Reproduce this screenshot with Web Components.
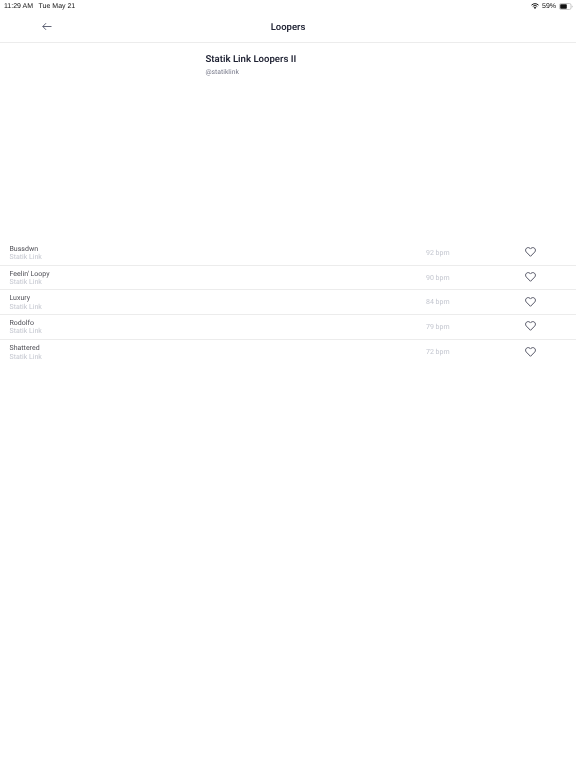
<!DOCTYPE html>
<html>
<head>
<meta charset="utf-8">
<style>
  html, body { margin: 0; height: 100%; background: #fff; }
  body { font-family: Roboto, "Noto Sans", sans-serif; width: 576px; height: 768px; overflow: hidden; text-rendering: geometricPrecision; }
  #page { opacity: .999; will-change: opacity; }
</style>
</head>
<body>
<div id="page">
<status-bar time="11:29 AM" date="Tue May 21" battery="59%"></status-bar>
<nav-bar title="Loopers"></nav-bar>
<pack-header title="Statik Link Loopers II" handle="@statiklink"></pack-header>
<loop-list>
  <loop-row name="Bussdwn" artist="Statik Link" bpm="92 bpm"></loop-row>
  <loop-row name="Feelin' Loopy" artist="Statik Link" bpm="90 bpm"></loop-row>
  <loop-row name="Luxury" artist="Statik Link" bpm="84 bpm"></loop-row>
  <loop-row name="Rodolfo" artist="Statik Link" bpm="79 bpm"></loop-row>
  <loop-row name="Shattered" artist="Statik Link" bpm="72 bpm" last></loop-row>
</loop-list>
</div>
<script>
class StatusBar extends HTMLElement {
  connectedCallback() {
    this.attachShadow({ mode: 'open' }).innerHTML = `
    <style>
      :host { display: flex; height: 12px; padding: 0 3px 0 4px; align-items: center; justify-content: space-between;
        font: 400 7px "Liberation Sans", Arial, sans-serif; color: #111; }
      .left { display: flex; gap: 5.5px; padding-top: 1px; }
      .right { display: flex; align-items: center; gap: 3px; padding-top: 1px; }
      .wifi { margin-top: -1px; }
      .batt { display: block; }
    </style>
    <div class="left"><span>${this.getAttribute('time')}</span><span>${this.getAttribute('date')}</span></div>
    <div class="right">
      <svg class="wifi" width="8" height="6" viewBox="0 0 16 12" fill="none" stroke="#111" stroke-width="2">
        <path d="M1 4.200C5 .4 11 .4 15 4.200M3.500 7c2.600-2.400 6.400-2.400 9 0"/><path d="M8 11.800 5.200 9c1.600-1.400 4-1.400 5.600 0z" fill="#111" stroke="none"/>
      </svg>
      <span>${this.getAttribute('battery')}</span>
      <svg class="batt" width="14" height="7" viewBox="0 0 14 7">
        <rect x=".5" y=".5" width="11.500" height="6" rx="1.600" fill="none" stroke="#bbb" stroke-width=".8"/>
        <rect x="1.200" y="1.200" width="6.600" height="4.600" rx=".8" fill="#111"/>
        <path d="M12.800 2.400c.6.2.9.6.9 1.100s-.3.9-.9 1.100z" fill="#bbb"/>
      </svg>
    </div>`;
  }
}
class NavBar extends HTMLElement {
  connectedCallback() {
    this.attachShadow({ mode: 'open' }).innerHTML = `
    <style>
      :host { display: flex; height: 30px; position: relative; align-items: center; justify-content: center;
        border-bottom: 1px solid #ececec; color: #1f2233; font-size: 9.500px; font-weight: 600; }
      svg { position: absolute; left: 42px; top: 10px; }
    </style>
    <svg width="10" height="9" viewBox="0 0 10 9" fill="none" stroke="#3a3f55" stroke-width=".8"><path d="M9.500 4.500H.8M4 1.200.8 4.500 4 7.800"/></svg>
    <span>${this.getAttribute('title')}</span>`;
  }
}
class PackHeader extends HTMLElement {
  connectedCallback() {
    this.attachShadow({ mode: 'open' }).innerHTML = `
    <style>
      :host { display: flex; flex-direction: column; height: 198px; padding: 9.500px 0 0 205.500px; box-sizing: border-box; }
      h1 { margin: 0; font-size: 9.600px; line-height: 13px; font-weight: 600; color: #1f2233; }
      p { margin: 0; font-size: 6.800px; line-height: 12px; color: #77798a; }
    </style>
    <h1>${this.getAttribute('title')}</h1>
    <p>${this.getAttribute('handle')}</p>`;
  }
}
class LoopList extends HTMLElement {
  connectedCallback() {
    this.attachShadow({ mode: 'open' }).innerHTML = `
    <style>:host { display: flex; flex-direction: column; }</style>
    <slot></slot>`;
  }
}
class LoopRow extends HTMLElement {
  connectedCallback() {
    this.attachShadow({ mode: 'open' }).innerHTML = `
    <style>
      :host { display: flex; height: 24.700px; box-sizing: border-box; align-items: center; padding-left: 9.500px;
        border-bottom: 1px solid #ececec; }
      :host([last]) { border-bottom: none; }
      .info { flex: 1; display: flex; flex-direction: column; padding-top: 1px; font-size: 7px; line-height: 8.400px; }
      .name { color: #4d4d54; }
      .artist { color: #c3c6cf; }
      .bpm { width: 99px; font-size: 7px; color: #c3c6cf; }
      svg { margin: -1px 40px 0 0; display: block; }
    </style>
    <div class="info"><span class="name">${this.getAttribute('name')}</span><span class="artist">${this.getAttribute('artist')}</span></div>
    <span class="bpm">${this.getAttribute('bpm')}</span>
    <svg width="11" height="10" viewBox="0 0 24 22" fill="none" stroke="#4a4c5c" stroke-width="2.100" stroke-linejoin="round">
      <path d="M12 20.500 2.900 11.300C.5 8.800.6 5 3 2.800 5.400.6 9.100.9 11.200 3.400L12 4.400l.8-1C14.900.9 18.600.6 21 2.800c2.400 2.200 2.500 6 .1 8.500z"/>
    </svg>`;
  }
}
customElements.define('status-bar', StatusBar);
customElements.define('nav-bar', NavBar);
customElements.define('pack-header', PackHeader);
customElements.define('loop-list', LoopList);
customElements.define('loop-row', LoopRow);
</script>
</body>
</html>
